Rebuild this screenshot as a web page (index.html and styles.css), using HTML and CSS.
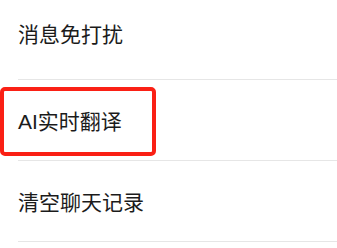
FILE: index.html
```html
<!DOCTYPE html>
<html lang="zh">
<head>
<meta charset="utf-8">
<link rel="stylesheet" href="styles.css">
</head>
<body>
<ul class="list">
  <li class="row row-first"><span class="label">消息免打扰</span></li>
  <li class="row row-marked"><span class="label">AI实时翻译</span><span class="mark"></span></li>
  <li class="row"><span class="label">清空聊天记录</span></li>
</ul>
</body>
</html>
```
FILE: styles.css
```css
html, body {
  margin: 0;
  padding: 0;
  background: #ffffff;
  overflow: hidden;
}
.list {
  list-style: none;
  margin: -1px 0 0 0;
  padding: 0;
}
.row {
  position: relative;
  height: 80px;
  margin-left: 18px;
  border-bottom: 1px solid #e6e6e6;
  display: flex;
  align-items: center;
  box-sizing: content-box;
}
.row-first {
  padding-bottom: 0;
}
.row-first .label {
  margin-bottom: 13px;
}
.label {
  font-family: "Liberation Sans", "Noto Sans CJK SC", sans-serif;
  font-size: 21px;
  color: #1b1b1b;
  line-height: 1;
  margin-top: 3px;
}
.mark {
  position: absolute;
  left: -18px;
  top: 7px;
  width: 156px;
  height: 69px;
  box-sizing: border-box;
  border: 4px solid #fa2015;
  border-radius: 5px;
}
```
